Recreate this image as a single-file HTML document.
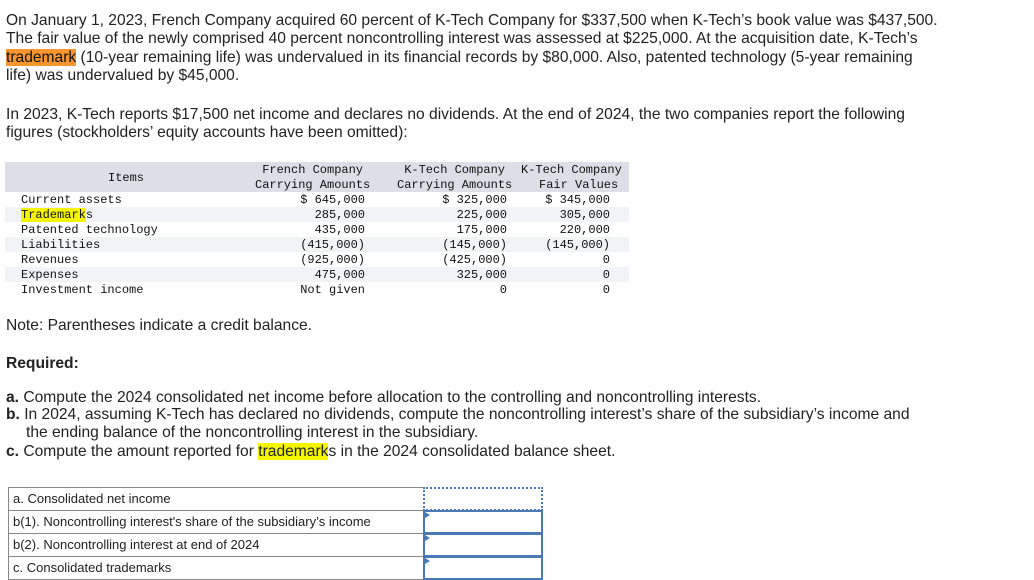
<!DOCTYPE html>
<html><head><meta charset="utf-8"><style>
body{margin:0;width:1034px;height:580px;background:#fff;color:#222;font-family:"Liberation Sans",sans-serif;position:relative;overflow:hidden}
.l{position:absolute;left:6px;font-size:15.6px;white-space:nowrap;line-height:18px}
.m{position:absolute;font-family:"Liberation Mono",monospace;font-size:12px;white-space:pre;line-height:15px;color:#111}
.r{text-align:right}
.hl{background:#f7952f;color:#111}
.hy{background:#f5f500}
.stripe{position:absolute;left:5px;width:624px;height:15px;background:#f2f3f7}
.cell{position:absolute;border:1px solid #888;font-size:13px;line-height:22px;padding-left:4px;box-sizing:border-box;white-space:nowrap}
.inp{position:absolute;border:2px solid #4a7ab5;box-sizing:border-box;left:423px;width:120px}
.tri{position:absolute;left:0;top:0;width:0;height:0;border-top:3px solid transparent;border-bottom:3px solid transparent;border-left:5px solid #4a7ab5}
</style></head><body>
<div class="l" style="top:12px">On January 1, 2023, French Company acquired 60 percent of K-Tech Company for $337,500 when K-Tech’s book value was $437,500.</div>
<div class="l" style="top:30px">The fair value of the newly comprised 40 percent noncontrolling interest was assessed at $225,000. At the acquisition date, K-Tech’s</div>
<div class="l" style="top:49px"><span class="hl">trademark</span> (10-year remaining life) was undervalued in its financial records by $80,000. Also, patented technology (5-year remaining</div>
<div class="l" style="top:67px">life) was undervalued by $45,000.</div>
<div class="l" style="top:106px">In 2023, K-Tech reports $17,500 net income and declares no dividends. At the end of 2024, the two companies report the following</div>
<div class="l" style="top:124px">figures (stockholders’ equity accounts have been omitted):</div>

<div style="position:absolute;left:5px;top:162px;width:624px;height:30px;background:#dcdfe8"></div>
<div class="stripe" style="top:207px"></div>
<div class="stripe" style="top:237px"></div>
<div class="stripe" style="top:267px"></div>
<div class="m" style="left:108px;top:171px">Items</div>
<div class="m" style="left:255px;top:163px;text-align:center">French Company
Carrying Amounts</div>
<div class="m" style="left:397px;top:163px;text-align:center">K-Tech Company
Carrying Amounts</div>
<div class="m" style="left:521px;top:163px;text-align:center">K-Tech Company
  Fair Values</div>
<div class="m" style="left:21px;top:193px">Current assets
<span class="hy">Trademark</span>s
Patented technology
Liabilities
Revenues
Expenses
Investment income</div>
<div class="m r" style="right:669px;top:193px">$ 645,000
285,000
435,000
(415,000)
(925,000)
475,000
Not given</div>
<div class="m r" style="right:527px;top:193px">$ 325,000
225,000
175,000
(145,000)
(425,000)
325,000
0</div>
<div class="m r" style="right:424px;top:193px">$ 345,000
305,000
220,000
(145,000)
0
0
0</div>

<div class="l" style="top:317px">Note: Parentheses indicate a credit balance.</div>
<div class="l" style="top:355px;font-weight:bold">Required:</div>
<div class="l" style="top:389px"><b>a.</b> Compute the 2024 consolidated net income before allocation to the controlling and noncontrolling interests.</div>
<div class="l" style="top:406px"><b>b.</b> In 2024, assuming K-Tech has declared no dividends, compute the noncontrolling interest’s share of the subsidiary’s income and</div>
<div class="l" style="top:424px;left:26px">the ending balance of the noncontrolling interest in the subsidiary.</div>
<div class="l" style="top:443px"><b>c.</b> Compute the amount reported for <span class="hy">trademark</span>s in the 2024 consolidated balance sheet.</div>

<div class="cell" style="left:8px;top:487px;width:416px;height:24px">a. Consolidated net income</div>
<div class="cell" style="left:8px;top:510px;width:416px;height:24px">b(1). Noncontrolling interest's share of the subsidiary’s income</div>
<div class="cell" style="left:8px;top:533px;width:416px;height:24px">b(2). Noncontrolling interest at end of 2024</div>
<div class="cell" style="left:8px;top:556px;width:416px;height:24px">c. Consolidated trademarks</div>
<div style="position:absolute;left:423px;top:487px;width:120px;height:24px;background:#fff;border:2px dotted #4a7ab5;box-sizing:border-box"></div>
<div class="inp" style="top:510px;height:24px"><div class="tri"></div></div>
<div class="inp" style="top:533px;height:24px"><div class="tri"></div></div>
<div class="inp" style="top:556px;height:24px"><div class="tri"></div></div>
</body></html>
